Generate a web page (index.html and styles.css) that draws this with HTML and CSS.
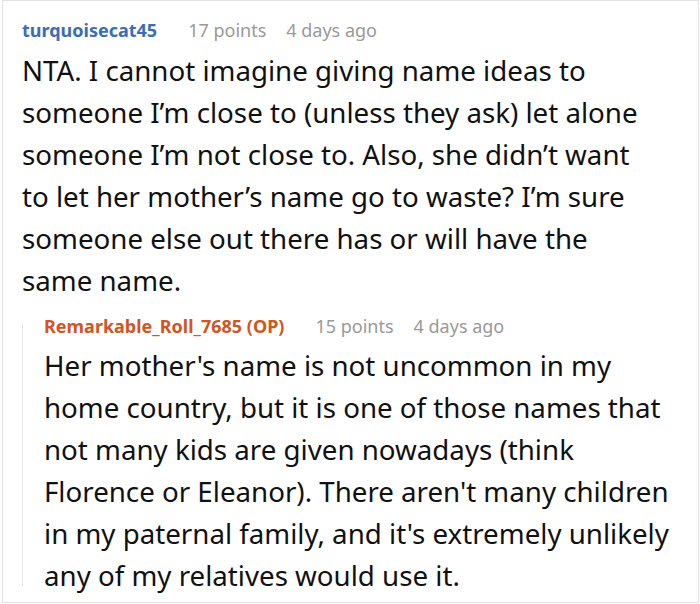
FILE: index.html
```html
<!DOCTYPE html>
<html lang="en">
<head>
<meta charset="utf-8">
<title>Comments</title>
<link rel="stylesheet" href="styles.css">
</head>
<body>
<div class="card">
  <div class="comment">
    <div class="meta">
      <span class="author">turquoisecat45</span>
      <span class="points">17 points</span>
      <span class="time">4 days ago</span>
    </div>
    <p class="text">NTA. I cannot imagine giving name ideas to<br>someone I’m close to (unless they ask) let alone<br>someone I’m not close to. Also, she didn’t want<br>to let her mother’s name go to waste? I’m sure<br>someone else out there has or will have the<br>same name.</p>
    <div class="reply">
      <div class="meta">
        <span class="author op">Remarkable_Roll_7685 (OP)</span>
        <span class="points">15 points</span>
        <span class="time">4 days ago</span>
      </div>
      <p class="text">Her mother's name is not uncommon in my<br>home country, but it is one of those names that<br>not many kids are given nowadays (think<br>Florence or Eleanor). There aren't many children<br>in my paternal family, and it's extremely unlikely<br>any of my relatives would use it.</p>
    </div>
  </div>
</div>
</body>
</html>
```

FILE: styles.css
```css
html, body {
  margin: 0;
  padding: 0;
  background: #fff;
}

body {
  font-family: "Noto Sans", "Open Sans", sans-serif;
  color: #111;
}

.card {
  margin-left: 2px;
  width: 697px;
  height: 603px;
  box-sizing: border-box;
  border: 1px solid #e2e2e2;
  padding: 17px 10px 0 19px;
  overflow: hidden;
}

.meta {
  display: flex;
  align-items: center;
  height: 24px;
  font-size: 18px;
  line-height: 24px;
  margin-bottom: 7px;
  white-space: nowrap;
}

.author {
  font-weight: bold;
  color: #3b6db5;
  margin-right: 31px;
}

.author.op {
  color: #d2541f;
}

.points {
  color: #999;
  margin-right: 20px;
}

.time {
  color: #999;
}

.text {
  margin: 0;
  font-size: 27.7px;
  line-height: 42px;
  color: #111;
  white-space: nowrap;
}

.reply {
  position: relative;
  margin-top: 13px;
  padding-left: 22px;
}

.reply .meta {
  margin-bottom: 6px;
}

.reply::before {
  content: "";
  position: absolute;
  left: 0;
  top: 10px;
  bottom: 10px;
  width: 1px;
  background: #e4e4e4;
}
```
